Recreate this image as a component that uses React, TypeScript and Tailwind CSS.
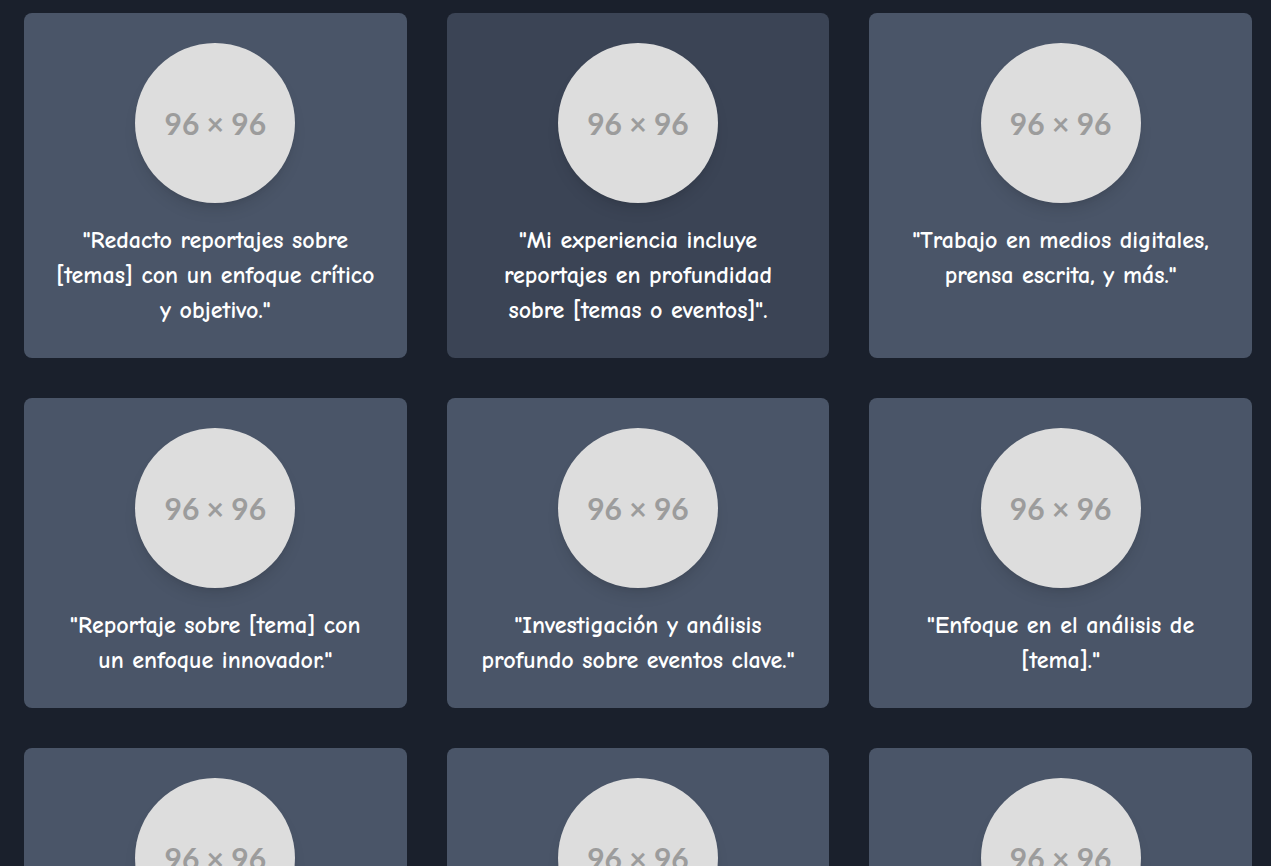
import React from 'react';

interface Testimonio {
  id: number;
  lineas: string[];
  destacado?: boolean;
}

const testimonios: Testimonio[] = [
  { id: 1, lineas: ['"Redacto reportajes sobre', '[temas] con un enfoque crítico', 'y objetivo."'] },
  { id: 2, lineas: ['"Mi experiencia incluye', 'reportajes en profundidad', 'sobre [temas o eventos]".'], destacado: true },
  { id: 3, lineas: ['"Trabajo en medios digitales,', 'prensa escrita, y más."'] },
  { id: 4, lineas: ['"Reportaje sobre [tema] con', 'un enfoque innovador."'] },
  { id: 5, lineas: ['"Investigación y análisis', 'profundo sobre eventos clave."'] },
  { id: 6, lineas: ['"Enfoque en el análisis de', '[tema]."'] },
  { id: 7, lineas: ['"Entrevistas con protagonistas', 'de [sector]."'] },
  { id: 8, lineas: ['"Crónicas sobre la actualidad', 'local e internacional."'] },
  { id: 9, lineas: ['"Cobertura de eventos', 'en tiempo real."'] }
];

// Imagen de relleno 96x96, mostrada a 160px
const Placeholder: React.FC = () => (
  <div className="w-40 h-40 mx-auto rounded-full bg-[#dddddd] shadow-lg flex items-center justify-center">
    <span className="text-[30px] font-bold text-[#9c9c9c]" style={{ fontFamily: 'Lato, "Open Sans", sans-serif' }}>
      96 × 96
    </span>
  </div>
);

const Card: React.FC<{ item: Testimonio }> = ({ item }) => (
  <div
    className={`rounded-lg p-[30px] text-center ${item.destacado ? 'bg-[#3b4455]' : 'bg-[#4a5568]'}`}
  >
    <Placeholder />
    <p className="mt-5 text-[24px] font-bold leading-[35px] text-white">
      {item.lineas.map((l, i) => (
        <span key={i} className="block whitespace-nowrap">{l}</span>
      ))}
    </p>
  </div>
);

export default function App() {
  return (
    <div
      className="min-h-screen bg-[#1a202c] pt-[13px] pb-10 pl-6 pr-[19px]"
      style={{ fontFamily: '"Comic Sans MS", "Comic Neue", "DejaVu Sans", sans-serif' }}
    >
      <div className="grid grid-cols-3 gap-x-10 gap-y-10">
        {testimonios.map(t => (
          <Card key={t.id} item={t} />
        ))}
      </div>
    </div>
  );
}
